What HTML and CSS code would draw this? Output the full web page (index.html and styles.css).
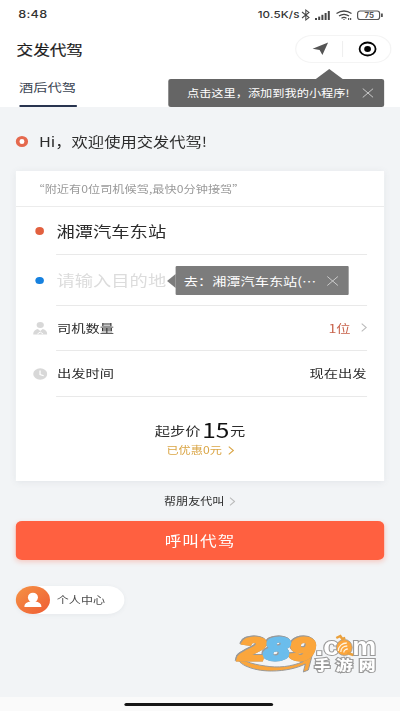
FILE: index.html
```html
<!DOCTYPE html>
<html lang="zh-CN">
<head>
<meta charset="utf-8">
<title>交发代驾</title>
<link rel="stylesheet" href="styles.css">
</head>
<body>
<div class="screen">
  <header class="top">
    <div class="status">
      <span class="clock">8:48</span>
      <span class="speed">10.5K/s</span>
      <svg class="status-icons" viewBox="0 0 84 14" preserveAspectRatio="none">
        <path d="M2 4l7 5.6-3.2 2.4V2L9 4.4 2 10" fill="none" stroke="#444" stroke-width="1"/>
        <g fill="#444"><rect x="15" y="10" width="2" height="2"/><rect x="18.2" y="8.6" width="2" height="3.4"/><rect x="21.4" y="6.8" width="2" height="5.2"/><rect x="24.6" y="5" width="2" height="7"/><rect x="27.8" y="3" width="2" height="9"/></g>
        <g fill="none" stroke="#444" stroke-width="1.3"><path d="M36.5 5.5Q44 .5 51.5 5.5M39 8Q44 4.700 49 8M41.500 10.200Q44 8.600 46.500 10.200"/></g>
        <path d="M43 11h2l-1 1.300zM48 10h1.200v2H48zM50 10h1.200v2H50z" fill="#555"/>
        <rect x="57.600" y="3" width="22" height="8.500" rx="2.500" fill="#fff" stroke="#555" stroke-width="1.200"/>
        <rect x="81" y="5.500" width="1.800" height="3.500" fill="#555"/>
        <text x="64.500" y="10" font-size="7.500" font-weight="700" textLength="9.500" lengthAdjust="spacingAndGlyphs" fill="#555">75</text>
      </svg>
    </div>
    <div class="titlebar">
      <h1>交发代驾</h1>
      <div class="capsule">
        <svg class="capsule-art" viewBox="0 0 97 28" preserveAspectRatio="none">
          <path d="M17.500 13.700L33 7.500 27.300 20 24.500 15z" fill="#555"/>
          <path d="M47.500 6v16" stroke="#eee"/>
          <ellipse cx="72.500" cy="14" rx="8" ry="6.500" fill="none" stroke="#050505" stroke-width="1.800"/>
          <ellipse cx="72.500" cy="14" rx="3.400" ry="2.900" fill="#050505"/>
        </svg>
      </div>
    </div>
    <nav class="tabs"><span class="tab">酒后代驾</span></nav>
    <div class="tip tip-add"><span>点击这里，添加到我的小程序!</span><svg class="close" viewBox="0 0 12 10" preserveAspectRatio="none"><path d="M.5.5l11 9M11.500.5l-11 9"/></svg></div>
  </header>

  <main>
    <div class="hello"><i class="ring"></i><span>Hi，欢迎使用交发代驾!</span></div>
    <section class="card">
      <div class="notice">“附近有0位司机候驾,最快0分钟接驾”</div>
      <div class="row place"><span class="lead"><i class="dot"></i></span><div class="field">湘潭汽车东站</div></div>
      <div class="row dest"><span class="lead"><i class="dot blue"></i></span>
        <div class="field">请输入目的地
          <div class="tip tip-to"><span>去：湘潭汽车东站(⋯</span><svg class="close" viewBox="0 0 12 10" preserveAspectRatio="none"><path d="M.5.5l11 9M11.500.5l-11 9"/></svg></div>
        </div>
      </div>
      <div class="row count"><span class="lead"><svg class="row-icon" viewBox="0 0 15 14" preserveAspectRatio="none"><ellipse cx="7.500" cy="3.300" rx="3.700" ry="3.200"/><path d="M.3 13.500C.3 9.500 3 8 5 7.600l2.500 2 2.500-2c2 .4 4.700 1.900 4.700 5.900z"/><path d="M4.500 13l3-2.200 3 2.200" fill="none" stroke="#fff" stroke-width="1"/></svg></span>
        <div class="field"><span>司机数量</span><span class="num">1位</span><svg class="arrow" viewBox="0 0 6 9" preserveAspectRatio="none"><path d="M.7.700l4.500 3.800L.7 8.300"/></svg></div></div>
      <div class="row when"><span class="lead"><svg class="row-icon" viewBox="0 0 14 12" preserveAspectRatio="none"><ellipse cx="7" cy="6" rx="6.700" ry="5.700"/><path d="M6.800 2.500v4l3.500 1.200" fill="none" stroke="#fff" stroke-width="1.200"/></svg></span>
        <div class="field"><span>出发时间</span><span class="now">现在出发</span></div></div>
      <div class="price"><span>起步价</span><b>15</b><span>元</span></div>
      <div class="saved">已优惠0元<svg class="arrow" viewBox="0 0 6 9" preserveAspectRatio="none"><path d="M.7.700l4.500 3.800L.7 8.300"/></svg></div>
    </section>
    <div class="friend">帮朋友代叫<svg class="arrow" viewBox="0 0 6 9" preserveAspectRatio="none"><path d="M.7.700l4.500 3.800L.7 8.300"/></svg></div>
    <button class="call">呼叫代驾</button>
    <div class="profile"><span class="avatar"><svg viewBox="0 0 34 28" preserveAspectRatio="none"><ellipse cx="17" cy="11.500" rx="5" ry="4.800"/><path d="M14.500 13h5v2.500c3 .7 6 1.500 6 5.500h-17c0-4 3-4.800 6-5.500z"/></svg></span>个人中心</div>
  </main>
  <footer><i class="home"></i></footer>

  <svg class="logo" viewBox="0 0 144 42" preserveAspectRatio="none">
    <path d="M2.500 20C-1 28 16 36 36 36c14 0 26-3 34-7l-2 8 5-2 5-19-13 11 3-.5C56 32 42 33 30 31 15 29 5 25 2.500 20z" fill="#fba63c" stroke="#999" stroke-width="1"/>
    <g class="digits" font-size="31">
      <text x="4" y="24.500" textLength="26" lengthAdjust="spacingAndGlyphs" fill="#fba63c" stroke="#fba63c">2</text>
      <text x="54" y="24.500" textLength="25" lengthAdjust="spacingAndGlyphs" fill="#fba63c" stroke="#fba63c">9</text>
      <text x="29" y="24.500" textLength="25" lengthAdjust="spacingAndGlyphs" fill="#6bbdec" stroke="#6bbdec">8</text>
    </g>
    <g class="domain" fill="#fff" stroke="#999" stroke-width="2" paint-order="stroke">
      <text x="80" y="19.500" font-size="25" textLength="24" lengthAdjust="spacingAndGlyphs">.c</text>
      <text x="117" y="19.500" font-size="25" textLength="24" lengthAdjust="spacingAndGlyphs">m</text>
    </g>
    <ellipse cx="109" cy="12.500" rx="8" ry="8" fill="#fba63c" stroke="#999" stroke-width=".8"/>
    <path d="M103 16c0-5 4-8 8.500-8M105.500 17c0-4 3-6 6.500-6M108.500 17.500c0-2 2-3.500 4-3.500" fill="none" stroke="#fff3df" stroke-width="1.300"/>
    <path d="M101 3l4-2 2 3 3-1M112 18l6 2" fill="none" stroke="#eaa03c" stroke-width="2.500"/>
    <g class="site" font-size="13.500" fill="#fff" stroke="#999" stroke-width="2" paint-order="stroke">
      <text x="79" y="35" textLength="16" lengthAdjust="spacingAndGlyphs">手</text>
      <text x="100.500" y="35" textLength="17" lengthAdjust="spacingAndGlyphs">游</text>
      <text x="123.500" y="35" textLength="17" lengthAdjust="spacingAndGlyphs">网</text>
    </g>
  </svg>
</div>
</body>
</html>
```
FILE: styles.css
```css
* { box-sizing: border-box; margin: 0; padding: 0; }
html, body { width: 400px; height: 711px; overflow: hidden; }
body { background: #f2f4f6; }
i { display: block; }
svg { display: block; flex: none; }

/* 328-unit layout, widened to the 400px window */
.screen {
  position: relative;
  display: flex;
  flex-direction: column;
  width: 328px;
  height: 711px;
  transform: scaleX(1.2195);
  transform-origin: 0 0;
  font-family: "Noto Sans CJK SC", sans-serif;
  color: #2c2c2c;
  white-space: nowrap;
}

.top { position: relative; height: 107px; background: #fff; }
.status { display: flex; align-items: center; height: 30px; padding-left: 15px; font: 500 10.5px/30px Inter, sans-serif; color: #333; }
.clock { flex: 1; font-size: 10.400px; letter-spacing: .2px; }
.speed { font-size: 9.500px; letter-spacing: .1px; }
.status-icons { width: 68.900px; height: 14px; margin: 0 13.500px 0 0; }

.titlebar { display: flex; align-items: center; justify-content: space-between; height: 38px; padding: 0 7px 0 13.600px; }
h1 { font-size: 13.600px; font-weight: 400; line-height: 38px; color: #1c1c1c; -webkit-text-stroke: .2px #1c1c1c; margin-top: -1px; }
.capsule { width: 79.500px; height: 28px; border: 1px solid #f4f4f4; border-radius: 14px; }
.capsule-art { width: 79.500px; height: 28px; margin: -1px; }
.tabs { display: flex; height: 39px; padding-left: 15.600px; }
.tab { width: 47.300px; height: 39px; border-bottom: 2px solid #28344f; font-size: 11.700px; line-height: 38px; color: #3c4654; }

.tip { position: absolute; z-index: 2; display: flex; align-items: center; justify-content: space-between; color: #fff; }
.tip::before { content: ""; position: absolute; }
.tip span { margin-top: -1px; }
.close { width: 9.500px; height: 10px; fill: none; stroke: #ccc; stroke-width: 1; }
.tip-add { top: 79px; left: 138px; width: 177px; height: 28px; padding: 0 9px 0 15.300px; border-radius: 2px; background: #656565; font-size: 10px; }
.tip-add::before { left: 121px; top: -10px; border: 11px solid transparent; border-top: 0; border-bottom: 10px solid #656565; }
.tip-to { left: 97.400px; top: 11px; width: 142px; height: 29px; padding: 0 8px 0 7px; border-radius: 1px; background: #7c7c7c; font-size: 11.650px; }
.tip-to::before { left: -7px; top: 8px; border: 7px solid transparent; border-left: 0; border-right: 7px solid #7c7c7c; }

main { flex: 1; padding: 0 13.100px; }
.hello { display: flex; align-items: center; height: 64px; padding-top: 5px; font-size: 13.350px; }
.ring { width: 10.400px; height: 11px; margin-right: 8.500px; border: 3px solid #e5694e; border-radius: 50%; background: #fff; }
.card { height: 310px; background: #fff; box-shadow: 0 1px 6px rgba(90, 100, 115, .1); }
.notice { height: 36px; padding-left: 13.500px; border-bottom: 1px solid #ececec; font-size: 10px; line-height: 35px; color: #999; }
.row { display: flex; align-items: center; padding-right: 14.400px; }
.lead { display: flex; justify-content: center; width: 32.900px; padding-left: 6.500px; }
.field { position: relative; display: flex; flex: 1; align-items: center; height: 100%; margin-left: .3px; border-bottom: 1px solid #e9e9e9; padding-bottom: 1px; }
.place { height: 48px; font-size: 15px; }
.dest { height: 51px; font-size: 15px; }
.dest .field { color: #dcdcdc; }
.count { height: 45px; font-size: 11.700px; }
.when { height: 46px; font-size: 11.700px; }
.count .field, .when .field { padding-bottom: 2px; padding-left: .5px; }
.dot { width: 7px; height: 7.500px; border-radius: 50%; background: #e2603f; }
.dot.blue { background: #1681df; }
.row-icon { width: 12px; height: 13px; fill: #d8d8d8; }
.when .row-icon { height: 12px; }
.num, .now { margin-left: auto; }
.num { color: #c8634c; }
.arrow { width: 5px; height: 9px; fill: none; stroke: #bbb; stroke-width: 1.100; }
.num + .arrow { margin-left: 8px; }

.price { display: flex; align-items: baseline; justify-content: center; height: 30px; margin-top: 18px; line-height: 30px; font-size: 12.500px; }
.price span { margin-bottom: 2px; transform: translateY(-2px); }
.price b { margin: 0 .5px 0 1.500px; font-size: 20px; font-weight: 400; color: #111; }
.saved { display: flex; align-items: center; justify-content: center; height: 14px; margin-top: -2px; font-size: 10px; line-height: 14px; color: #daa545; }
.saved .arrow { margin-left: 4.500px; stroke: #daa545; }
.friend { display: flex; align-items: center; justify-content: center; height: 40px; font-size: 9.900px; }
.friend .arrow { margin-left: 4.500px; }
.call { display: block; width: 301.800px; height: 38.500px; border: 0; border-radius: 5px; background: #ff6040; box-shadow: 0 2px 5px rgba(255, 96, 64, .28); color: #fff; font: 400 13.600px/38px "Noto Sans CJK SC", sans-serif; letter-spacing: .9px; }
.profile { display: flex; align-items: center; width: 89px; height: 28px; margin-top: 26px; border-radius: 14px; background: #fff; box-shadow: 0 1px 4px rgba(90, 100, 115, .08); font-size: 9.900px; color: #4b4b4b; }
.avatar { width: 28px; height: 28px; margin-right: 5.500px; border-radius: 50%; background: linear-gradient(135deg, #f59345, #ef5c34); }
.avatar svg { width: 28px; height: 28px; fill: #fff; }

footer { display: flex; justify-content: center; height: 14px; padding: 6px 3px 0 0; background: #fafafa; }
.home { width: 122px; height: 3px; border-radius: 2px; background: #161616; }

.logo { position: absolute; left: 193px; top: 635px; width: 118px; height: 42px; overflow: visible; }
.digits { font-family: "Liberation Sans", sans-serif; font-weight: 700; font-style: italic; stroke-width: 3; filter: drop-shadow(.6px .6px 0 #999) drop-shadow(-.6px -.6px 0 #999); }
.domain { font-family: "Liberation Sans", sans-serif; font-weight: 700; }
.site { font-family: "Noto Sans CJK SC", sans-serif; font-weight: 900; }
```
